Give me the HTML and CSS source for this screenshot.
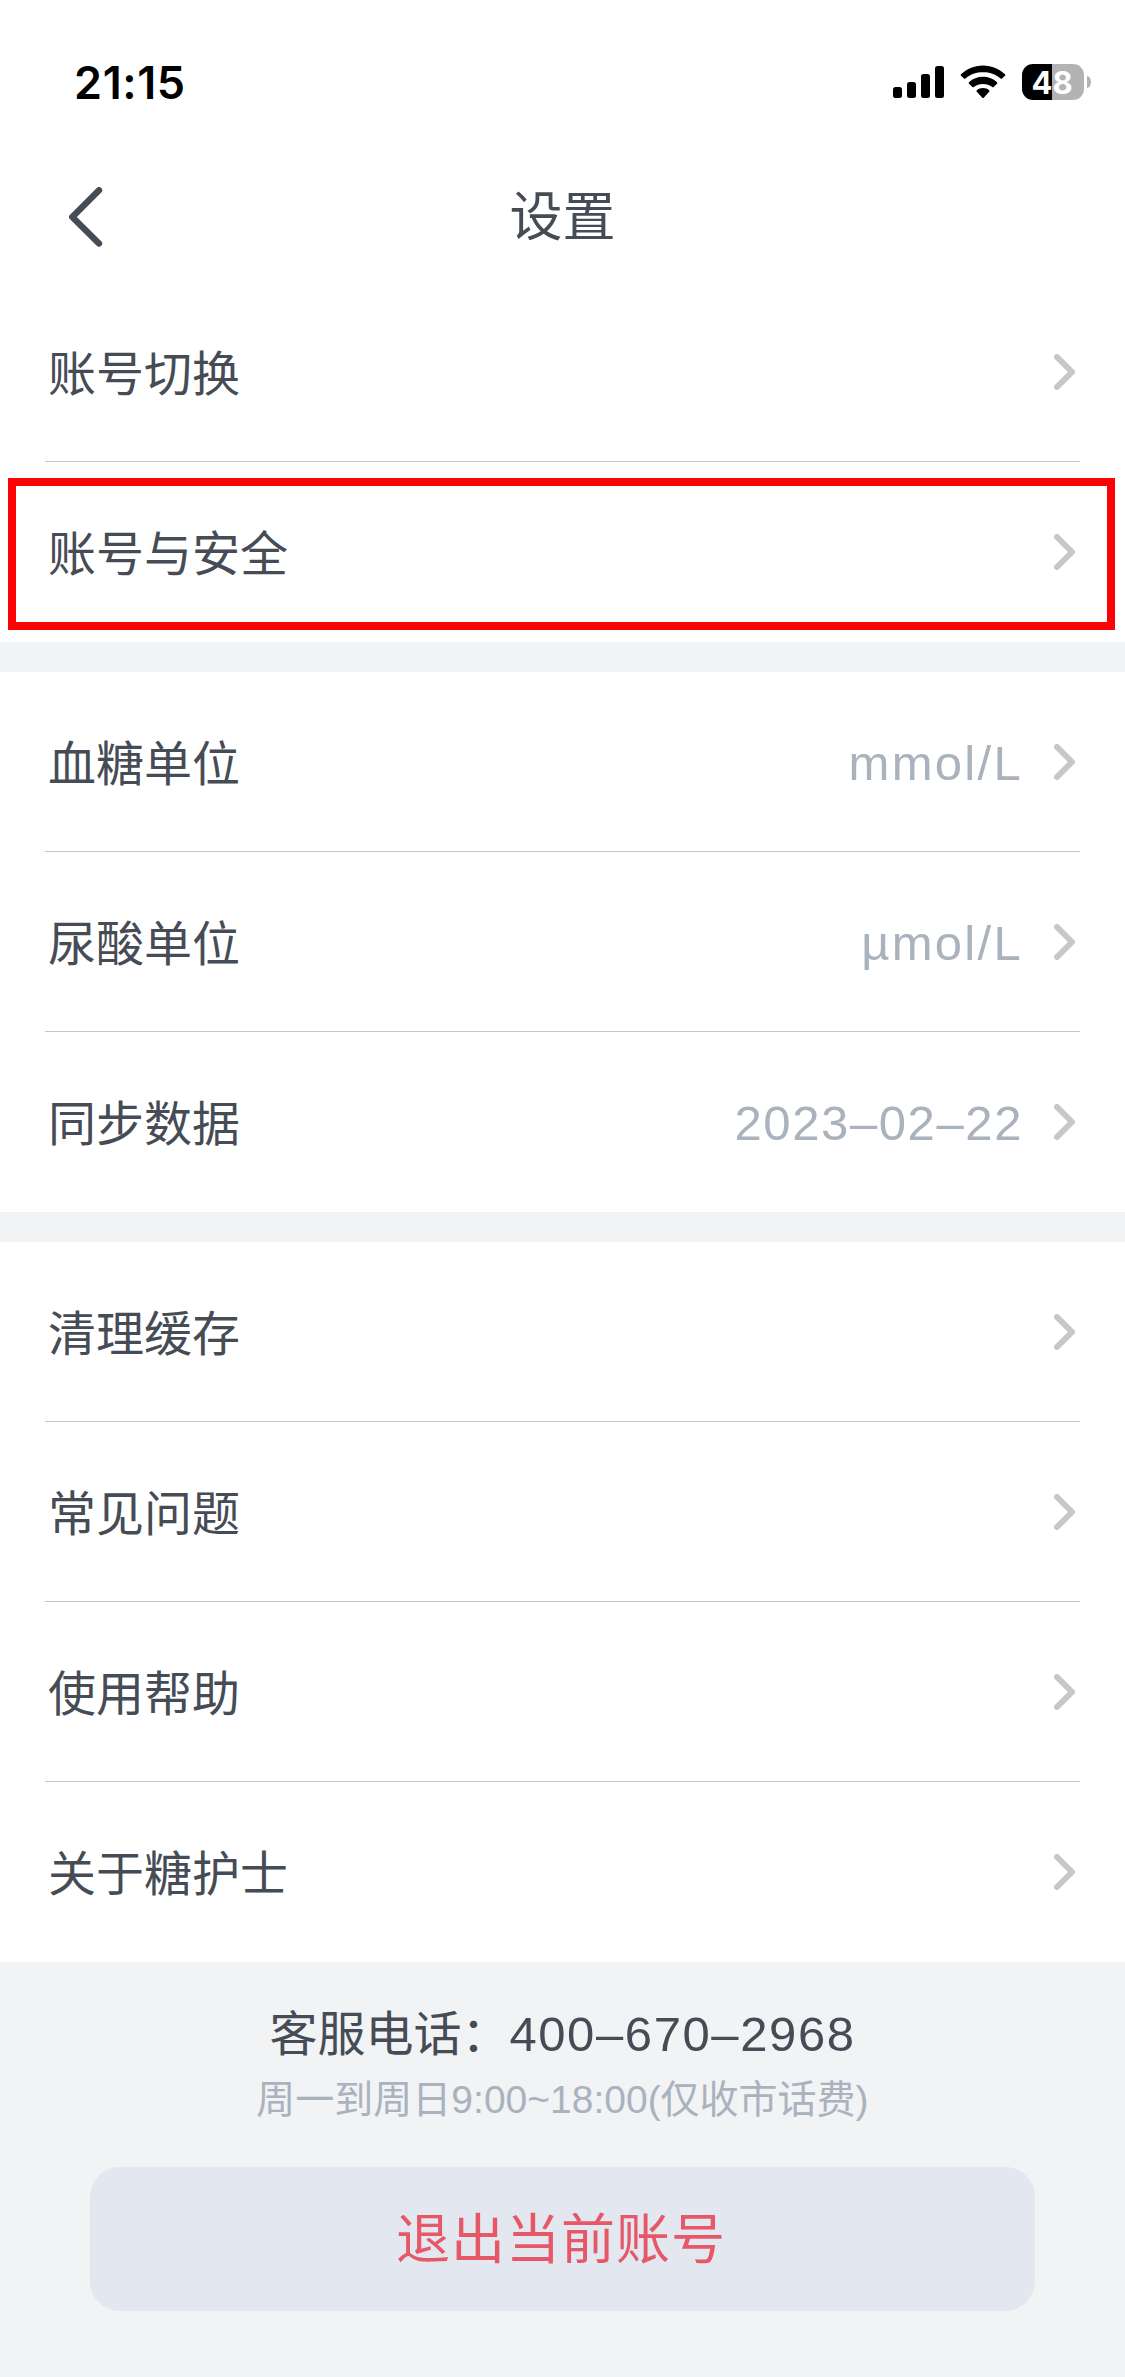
FILE: index.html
```html
<!DOCTYPE html>
<html lang="zh-CN">
<head>
    <meta charset="UTF-8">
    <meta name="viewport" content="width=device-width, initial-scale=1.0">
    <title>设置</title>
    <link rel="stylesheet" href="styles.css">
</head>
<body>
    <svg class="sprite" width="0" height="0">
        <symbol id="arrow" viewBox="0 0 21 36">
            <path d="M3 3l15 15-15 15" fill="none" stroke="currentColor" stroke-width="6" stroke-linecap="round" stroke-linejoin="round"/>
        </symbol>
    </svg>

    <div class="status-bar">
        <span class="time">21:15</span>
        <div class="status-icons">
            <svg class="signal" width="51" height="32" viewBox="0 0 51 32">
                <rect x="0" y="21" width="9" height="11" rx="2.5"/>
                <rect x="14" y="16" width="9" height="16" rx="2.5"/>
                <rect x="28" y="8" width="9" height="24" rx="2.5"/>
                <rect x="42" y="0" width="9" height="32" rx="2.5"/>
            </svg>
            <svg class="wifi" width="46" height="34" viewBox="0 0 46 34">
                <path d="M23 0.500C32 0.500 39.500 4 45 9.300Q45.800 10 45 10.800L42 13.600Q41.300 14.200 40.600 13.600C35.500 9 29.600 7.300 23 7.300S10.500 9 5.400 13.600Q4.700 14.200 4 13.600L1 10.800Q0.200 10 1 9.300C6.500 4 14 0.500 23 0.500Z"/>
                <path d="M23 11.800C28.500 11.800 33.300 13.800 37 17.200Q37.800 18 37 18.800L33.600 22Q32.900 22.600 32.200 22C29.600 19.700 26.500 18.900 23 18.900S16.400 19.700 13.800 22Q13.100 22.600 12.400 22L9 18.800Q8.200 18 9 17.200C12.700 13.800 17.500 11.800 23 11.800Z"/>
                <path d="M23 23C25.500 23 27.600 23.800 29.200 25.200Q30 26 29.200 26.800L23.700 32.800Q23 33.500 22.300 32.800L16.800 26.800Q16 26 16.800 25.200C18.400 23.800 20.500 23 23 23Z"/>
            </svg>
            <div class="battery"><span>48</span></div>
            <div class="battery-cap"></div>
        </div>
    </div>

    <header class="nav">
        <svg class="back" width="34" height="60" viewBox="0 0 34 60">
            <path d="M30 3.300L3.300 30 30 56.500" fill="none" stroke="#464c55" stroke-width="6.400" stroke-linecap="round" stroke-linejoin="round"/>
        </svg>
        <h1>设置</h1>
    </header>

    <main>
        <section class="group">
            <div class="row"><span class="label">账号切换</span><svg class="arrow"><use href="#arrow"/></svg></div>
            <div class="row highlight"><span class="label">账号与安全</span><svg class="arrow"><use href="#arrow"/></svg></div>
        </section>

        <section class="group">
            <div class="row"><span class="label">血糖单位</span><span class="value unit">mmol/L</span><svg class="arrow"><use href="#arrow"/></svg></div>
            <div class="row"><span class="label">尿酸单位</span><span class="value unit">µmol/L</span><svg class="arrow"><use href="#arrow"/></svg></div>
            <div class="row"><span class="label">同步数据</span><span class="value">2023–02–22</span><svg class="arrow"><use href="#arrow"/></svg></div>
        </section>

        <section class="group">
            <div class="row"><span class="label">清理缓存</span><svg class="arrow"><use href="#arrow"/></svg></div>
            <div class="row"><span class="label">常见问题</span><svg class="arrow"><use href="#arrow"/></svg></div>
            <div class="row"><span class="label">使用帮助</span><svg class="arrow"><use href="#arrow"/></svg></div>
            <div class="row"><span class="label">关于糖护士</span><svg class="arrow"><use href="#arrow"/></svg></div>
        </section>
    </main>

    <footer>
        <p class="phone">客服电话：<span class="number">400–670–2968</span></p>
        <p class="hours">周一到周日9:00~18:00(仅收市话费)</p>
        <button class="logout">退出当前账号</button>
    </footer>
</body>
</html>
```

FILE: styles.css
```css
*, *::before, *::after {
    box-sizing: border-box;
}
body {
    margin: 0;
    background: #f1f3f5;
    color: #464c55;
    font-family: "Liberation Sans", "Noto Sans CJK SC", sans-serif;
}
.sprite {
    display: block;
}

/* status bar */
.status-bar {
    display: flex;
    justify-content: space-between;
    align-items: center;
    height: 164px;
    padding: 0 34px 0 74px;
    background: #fff;
    color: #000;
}
.time {
    font-family: Inter, sans-serif;
    font-size: 45px;
    font-weight: 600;
    letter-spacing: 0.6px;
}
.status-icons {
    display: flex;
    align-items: center;
}
.wifi {
    margin: 0 16px;
}
.battery {
    display: flex;
    align-items: center;
    justify-content: center;
    width: 62px;
    height: 36px;
    padding-right: 2px;
    border-radius: 11px;
    background: linear-gradient(90deg, #000 30px, #b3b3b3 30px);
    color: #fff;
    font-family: Inter, sans-serif;
    font-size: 31px;
    font-weight: 700;
}
.battery-cap {
    width: 4px;
    height: 12px;
    margin-left: 3px;
    border-radius: 0 4px 4px 0 / 0 6px 6px 0;
    background: #b3b3b3;
}

/* title */
.nav {
    display: grid;
    grid-template-columns: 69px 1fr 69px;
    align-items: center;
    height: 118px;
    padding-bottom: 12px;
    background: #fff;
}
.back {
    grid-column: 1;
    justify-self: end;
    margin-right: -34px;
}
.nav h1 {
    margin: 0;
    padding-bottom: 9px;
    text-align: center;
    font-size: 53px;
    font-weight: 400;
}

/* list */
.group {
    margin-bottom: 30px;
    background: #fff;
}
.group:last-child {
    margin-bottom: 0;
}
.row {
    display: flex;
    align-items: center;
    position: relative;
    height: 180px;
    margin: 0 45px;
    padding: 0 5px 0 3px;
    border-bottom: 1px solid #c4c5c7;
}
.row:last-child {
    border-bottom-color: transparent;
}
.label {
    flex: 1;
    padding-bottom: 3px;
    font-size: 48px;
}
.value {
    margin-right: 31px;
    padding-top: 3px;
    color: #a9b2bd;
    font-size: 49px;
    letter-spacing: 1.6px;
}
.unit {
    letter-spacing: 2.3px;
}
.arrow {
    width: 21px;
    height: 36px;
    color: #c7c7c9;
}
.highlight::after {
    content: "";
    position: absolute;
    top: 16px;
    left: -37px;
    width: 1107px;
    height: 152px;
    border: 8px solid #fb0405;
}

/* footer */
footer {
    display: flex;
    flex-direction: column;
    align-items: center;
    height: 415px;
    padding-top: 36px;
}
footer p {
    margin: 0;
    white-space: nowrap;
}
.phone {
    font-size: 48px;
    line-height: 72px;
}
.number {
    font-size: 49px;
    letter-spacing: 1.6px;
}
.hours {
    color: #a9b2bd;
    font-size: 39px;
    line-height: 58px;
}
.logout {
    width: 945px;
    height: 144px;
    margin-top: 38px;
    padding: 0 3px 7px 0;
    border: none;
    border-radius: 30px;
    background: #e2e7f0;
    color: #e75867;
    font-family: inherit;
    font-size: 54px;
    letter-spacing: 1px;
}
```
